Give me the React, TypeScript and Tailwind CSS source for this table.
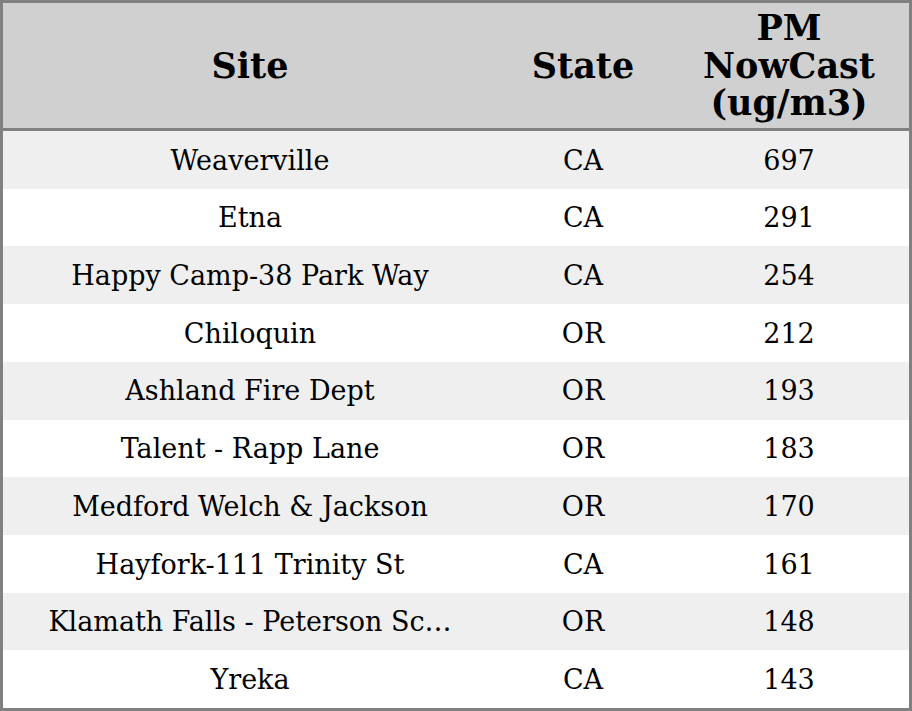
import React from "react";

const rows: [string, string, string][] = [
  ["Weaverville", "CA", "697"],
  ["Etna", "CA", "291"],
  ["Happy Camp-38 Park Way", "CA", "254"],
  ["Chiloquin", "OR", "212"],
  ["Ashland Fire Dept", "OR", "193"],
  ["Talent - Rapp Lane", "OR", "183"],
  ["Medford Welch & Jackson", "OR", "170"],
  ["Hayfork-111 Trinity St", "CA", "161"],
  ["Klamath Falls - Peterson Sc\u2026", "OR", "148"],
  ["Yreka", "CA", "143"],
];

export default function App() {
  return (
    <div
      className="w-[912px] h-[711px] border-[3px] border-[#808080] flex flex-col bg-white text-black"
      style={{ fontFamily: '"DejaVu Serif", serif' }}
    >
      <div className="h-[128px] shrink-0 bg-[#d0d0d0] border-b-[3px] border-[#808080] grid grid-cols-[494px_172px_1fr] items-center text-center font-bold text-[35px] leading-[37.5px]">
        <div>Site</div>
        <div>State</div>
        <div>
          PM
          <br />
          NowCast
          <br />
          (ug/m3)
        </div>
      </div>
      {rows.map((r, i) => (
        <div
          key={i}
          className={`flex-1 grid grid-cols-[494px_172px_1fr] items-center text-center text-[27px] pt-[2px] ${
            i % 2 === 0 ? "bg-[#efefef]" : "bg-white"
          }`}
        >
          <div className="px-[30px] whitespace-nowrap overflow-hidden">{r[0]}</div>
          <div>{r[1]}</div>
          <div>{r[2]}</div>
        </div>
      ))}
    </div>
  );
}
